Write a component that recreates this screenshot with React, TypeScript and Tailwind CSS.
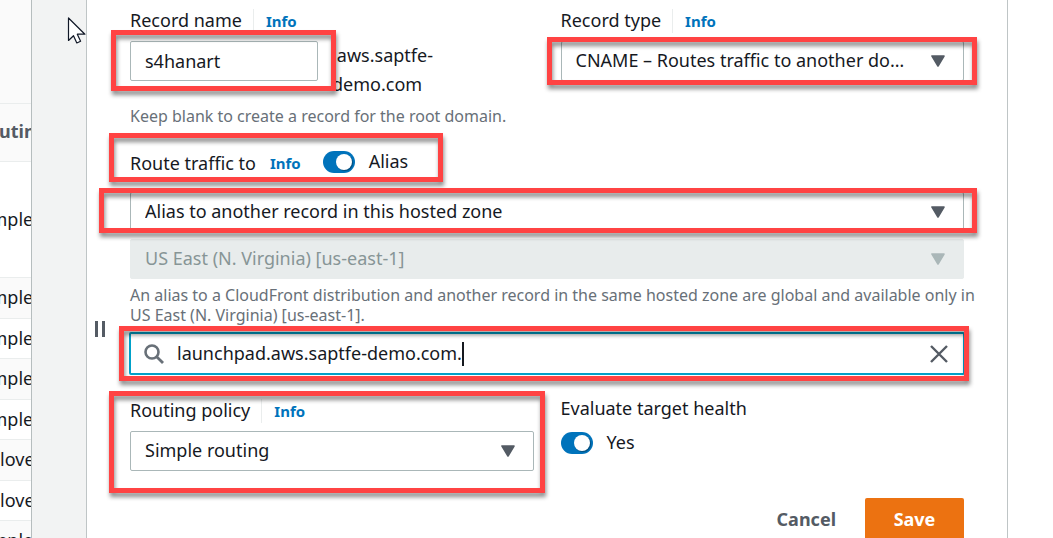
import type { ReactNode } from "react";

const rows = [
  { label: "Simple", className: "h-[116px] bg-white" },
  { label: "Simple", className: "h-[41px] bg-[#fafafa]" },
  { label: "Simple", className: "h-10 bg-white" },
  { label: "Simple", className: "h-[41px] bg-[#fafafa]" },
  { label: "Simple", className: "h-10 bg-white" },
  { label: "Failover", className: "h-[41px] bg-[#fafafa]" },
  { label: "Failover", className: "h-10 bg-white" },
  { label: "Simple", className: "h-[41px] bg-[#fafafa]" },
];

function RecordsTable() {
  return (
    <div className="w-8 shrink-0 overflow-hidden border-r border-[#b6bdbe] bg-white">
      <div className="h-[103px] bg-[#fafafa]" />
      <table className="-ml-6 w-24 table-fixed border-collapse text-left text-[18px] text-[#16191f]">
        <thead>
          <tr className="h-[58px] border-y border-[#eaeded] bg-[#fafafa]">
            <th className="p-0 pb-1 font-bold text-[#545b64]">Routing</th>
          </tr>
        </thead>
        <tbody>
          {rows.map((row, i) => (
            <tr key={i} className={`border-b border-[#eaeded] ${row.className}`}>
              <td className="p-0 pb-0.5">{row.label}</td>
            </tr>
          ))}
        </tbody>
      </table>
    </div>
  );
}

function Highlight({ className }: { className: string }) {
  return (
    <div
      aria-hidden="true"
      className={`pointer-events-none absolute z-10 border-5 border-[#ff4343] drop-shadow-[1px_4px_2px_rgba(0,0,0,0.45)] ${className}`}
    />
  );
}

function InfoLink() {
  return (
    <a href="#info" className="text-[15px] font-bold text-[#0073bb]">
      Info
    </a>
  );
}

function FieldLabel({ htmlFor, children }: { htmlFor: string; children: ReactNode }) {
  return (
    <div className="flex h-6 items-center">
      <label htmlFor={htmlFor} className="pr-[11px] pb-0.5">
        {children}
      </label>
      <span className="flex h-6 items-center border-l border-[#eaeded] pl-3">
        <InfoLink />
      </span>
    </div>
  );
}

function Select({
  id,
  label,
  value,
  disabled = false,
}: {
  id: string;
  label?: string;
  value: string;
  disabled?: boolean;
}) {
  return (
    <div className="relative">
      <select
        id={id}
        aria-label={label}
        disabled={disabled}
        className="block h-10 w-full appearance-none rounded-[2px] border border-[#aab7b8] bg-white pr-10 pb-0.5 pl-[14px] text-[#16191f] opacity-100 disabled:border-[#e8ecec] disabled:bg-[#e8ecec] disabled:text-[#879596]"
      >
        <option>{value}</option>
      </select>
      <svg
        viewBox="0 0 14 12"
        className={`pointer-events-none absolute top-[14px] right-[19px] h-3 w-[14px] ${
          disabled ? "text-[#aab7b8]" : "text-[#545b64]"
        }`}
      >
        <path d="M1 1h12L7 11z" fill="currentColor" stroke="currentColor" strokeWidth="1.6" strokeLinejoin="round" />
      </svg>
    </div>
  );
}

function Toggle({ id }: { id: string }) {
  return (
    <span className="relative flex h-[22px] w-8 shrink-0">
      <input
        id={id}
        type="checkbox"
        role="switch"
        defaultChecked
        className="peer h-[22px] w-8 appearance-none rounded-full bg-[#aab7b8] checked:bg-[#0073bb]"
      />
      <span className="pointer-events-none absolute top-[3px] left-[3px] size-4 rounded-full bg-white shadow-[1px_1px_1px_rgba(0,0,0,0.35)] peer-checked:left-[13px]" />
    </span>
  );
}

function RecordForm() {
  return (
    <form className="min-w-0 flex-1 pt-[9px] pr-[43px]">
      <div className="grid grid-cols-2 gap-[27px]">
        <div>
          <FieldLabel htmlFor="record-name">Record name</FieldLabel>
          <div className="mt-2 flex items-start gap-[14px]">
            <div className="relative w-[188px]">
              <input
                id="record-name"
                defaultValue="s4hanart"
                className="block h-10 w-full rounded-[2px] border border-[#aab7b8] bg-white px-[14px] text-[#16191f]"
              />
              <Highlight className="-top-[11px] -right-[18px] -bottom-[10px] -left-[19px]" />
            </div>
            <span className="w-32 leading-[29px]">.aws.saptfe-demo.com</span>
          </div>
          <p className="mt-[7px] text-[16px] leading-5 text-[#687078]">
            Keep blank to create a record for the root domain.
          </p>
        </div>
        <div>
          <FieldLabel htmlFor="record-type">Record type</FieldLabel>
          <div className="relative mt-2">
            <Select id="record-type" value="CNAME – Routes traffic to another do…" />
            <Highlight className="-top-1 -right-[13px] -bottom-1 -left-[14px]" />
          </div>
        </div>
      </div>

      <div className="relative mt-6 flex h-6 w-[300px] items-center">
        <span className="flex items-center gap-[14px] pt-0.5">
          <label htmlFor="route-target">Route traffic to</label>
          <InfoLink />
        </span>
        <span className="ml-[22px] flex items-center gap-[14px]">
          <Toggle id="alias" />
          <label htmlFor="alias" className="pb-0.5">
            Alias
          </label>
        </span>
        <Highlight className="-top-[17px] -right-[13px] -bottom-[8px] -left-[21px]" />
      </div>

      <div className="relative mt-[18px]">
        <Select id="route-target" value="Alias to another record in this hosted zone" />
        <Highlight className="-top-1 -right-[13px] -bottom-[1px] -left-[31px]" />
      </div>
      <div className="mt-[7px]">
        <Select id="region" label="Region" value="US East (N. Virginia) [us-east-1]" disabled />
      </div>
      <p className="-mr-4 mt-[6px] text-[16px] leading-5 text-[#687078]">
        An alias to a CloudFront distribution and another record in the same hosted zone are global and available only in
        US East (N. Virginia) [us-east-1].
      </p>

      <div className="relative -mx-px mt-[7px] flex h-[43px] items-center rounded-[2px] border-2 border-[#00a1c9] bg-white pr-[15px] pl-[13px]">
        <svg viewBox="0 0 20 20" className="mr-[13px] size-5 shrink-0 text-[#687078]" fill="none" stroke="currentColor">
          <circle cx="8" cy="8" r="6.5" strokeWidth="2.6" />
          <path d="M12.7 12.7 19 19" strokeWidth="2.8" />
        </svg>
        <input
          aria-label="Record value"
          defaultValue="launchpad.aws.saptfe-demo.com."
          className="field-sizing-content min-w-0 pb-0.5 text-[#16191f] outline-none"
        />
        <span className="h-6 w-[2px] bg-[#16191f]" />
        <button type="button" aria-label="Clear" className="ml-auto text-[#545b64]">
          <svg viewBox="0 0 18 18" className="size-[18px]" fill="none" stroke="currentColor" strokeWidth="2.4">
            <path d="M1 1 17 17M17 1 1 17" />
          </svg>
        </button>
        <Highlight className="-top-2 -right-[6px] -bottom-2 -left-3" />
      </div>

      <div className="mt-6 grid grid-cols-2 gap-[27px]">
        <div className="relative">
          <FieldLabel htmlFor="routing-policy">Routing policy</FieldLabel>
          <div className="mt-2">
            <Select id="routing-policy" value="Simple routing" />
          </div>
          <Highlight className="-top-2 -right-[11px] -bottom-[22px] -left-[21px]" />
        </div>
        <div>
          <div className="flex h-5 items-center pb-0.5">Evaluate target health</div>
          <div className="mt-3 flex h-6 items-center gap-[14px]">
            <Toggle id="evaluate-health" />
            <label htmlFor="evaluate-health" className="pb-0.5">
              Yes
            </label>
          </div>
        </div>
      </div>

      <div className="mt-[27px] flex justify-end gap-[29px] font-bold">
        <button type="button" className="h-11 pb-0.5 text-[#545b64]">
          Cancel
        </button>
        <button type="submit" className="h-11 w-[99px] rounded-[2px] bg-[#ec7211] pb-0.5 text-white">
          Save
        </button>
      </div>
    </form>
  );
}

function Pointer() {
  return (
    <svg viewBox="0 0 20 28" className="pointer-events-none absolute top-[17px] left-[67px] h-7 w-5">
      <path
        d="M1.5 1v22.5l5-4.8 3.3 7.3 3.8-1.7-3.3-7.1h7.6z"
        fill="white"
        stroke="#111827"
        strokeWidth="1.2"
        strokeLinejoin="round"
      />
    </svg>
  );
}

export default function App() {
  return (
    <div className="relative flex h-screen overflow-hidden bg-white font-['Noto_Sans',sans-serif] text-[18px] leading-6 text-[#16191f]">
      <RecordsTable />
      <div className="w-[54px] shrink-0 bg-[#f2f3f3]" />
      <main className="flex min-w-0 flex-1 border-x border-[#bfc5c6] bg-white">
        <div className="w-[43px] shrink-0 pt-[321px] pl-2">
          <button type="button" aria-label="Resize panel" className="flex h-4 gap-1">
            <span className="h-4 w-[3px] bg-[#545b64]" />
            <span className="h-4 w-[3px] bg-[#545b64]" />
          </button>
        </div>
        <RecordForm />
      </main>
      <div className="w-[45px] shrink-0 bg-white" />
      <Pointer />
    </div>
  );
}
